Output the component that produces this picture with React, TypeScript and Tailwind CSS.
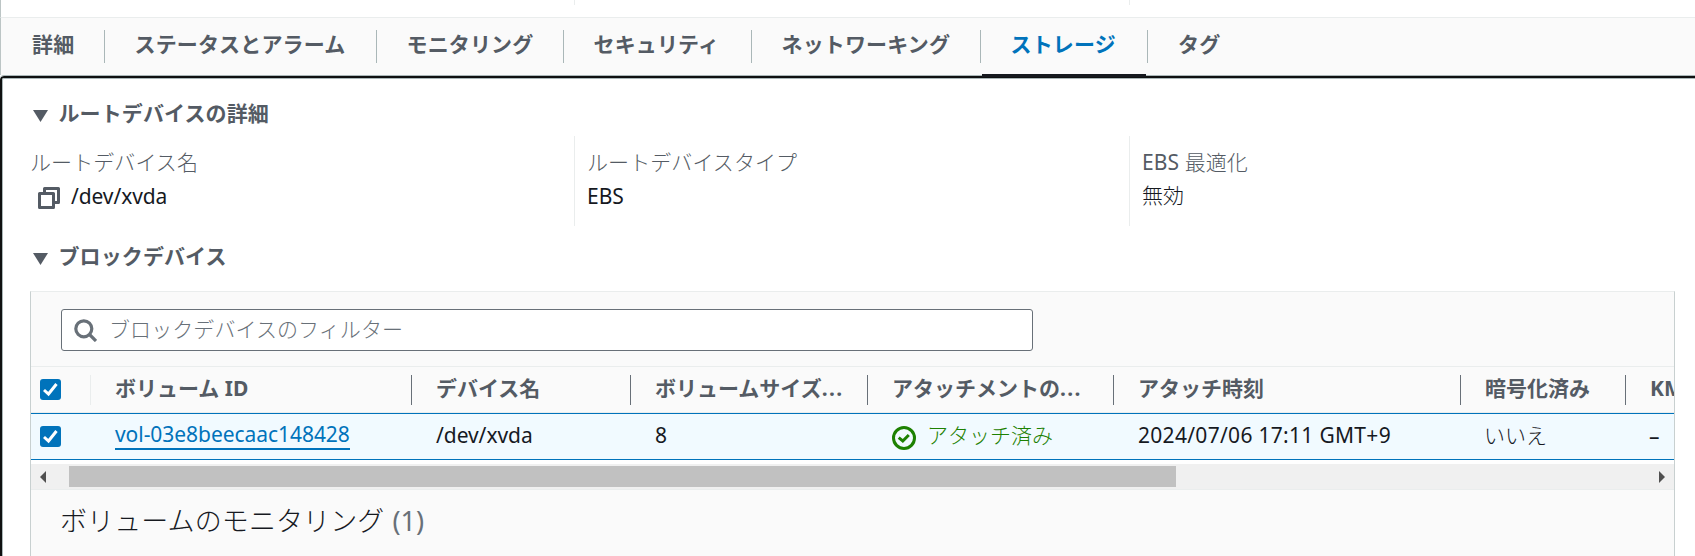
import type { ReactNode } from "react";

type Tab = { label: string; box: string; active?: boolean; last?: boolean };

const tabs: Tab[] = [
  { label: "詳細", box: "w-[104px] pl-[31px]" },
  { label: "ステータスとアラーム", box: "w-[272px] pl-[29.5px]" },
  { label: "モニタリング", box: "w-[187px] pl-[29.5px]" },
  { label: "セキュリティ", box: "w-[188px] pl-[29.5px]" },
  { label: "ネットワーキング", box: "w-[229px] pl-[29.5px]" },
  { label: "ストレージ", box: "w-[167px] pl-[29.5px]", active: true },
  { label: "タグ", box: "w-[120px] pl-[30px]", last: true },
];

function Caret() {
  return (
    <svg className="h-3 w-[15px] shrink-0" viewBox="0 0 15 12">
      <path d="M0 0H15L7.5 12Z" fill="#545b64" />
    </svg>
  );
}

function SectionTitle({ children }: { children: ReactNode }) {
  return (
    <div className="flex h-8 items-center gap-[11px] pl-[29.5px]">
      <span className="pt-1.5">
        <Caret />
      </span>
      <h2 className="text-[21px] leading-8 font-bold tracking-[0.1px] text-[#545b64]">{children}</h2>
    </div>
  );
}

function CopyIcon() {
  return (
    <svg className="h-[22px] w-[22px] shrink-0" viewBox="0 0 22 22" fill="none" stroke="#545b64" strokeWidth="3" strokeLinejoin="round">
      <path d="M1.5 6.5H15.5V20.5H1.5Z" />
      <path d="M6.5 6V1.5H20.5V15.5H16" />
    </svg>
  );
}

function Checkbox() {
  return (
    <span className="flex h-[21px] w-[21px] shrink-0 items-center justify-center rounded-[3px] bg-[#0073bb]">
      <svg className="h-[21px] w-[21px]" viewBox="0 0 21 21" fill="none" stroke="#fff" strokeWidth="3">
        <path d="M4 11L8.5 15L16.5 5" />
      </svg>
    </span>
  );
}

function Field({ label, children, first }: { label: ReactNode; children: ReactNode; first?: boolean }) {
  return (
    <div
      className={
        first
          ? "h-[90px] w-[571px] pt-[10px] pl-[27px]"
          : "h-[90px] w-[555px] border-l border-[#eaeded] pt-[10px] pl-[12px]"
      }
    >
      <div className="h-8 text-[21px] leading-8 font-light tracking-[0.08px] text-[#545b64]">{label}</div>
      <div className="flex h-9 items-center text-[21px] leading-9 text-[#16191f]">{children}</div>
    </div>
  );
}

function Dots() {
  return <span className="tracking-[1.4px]">...</span>;
}

const columns: { title: ReactNode; box: string }[] = [
  { title: "ボリューム ID", box: "w-[321px]" },
  { title: "デバイス名", box: "w-[219px]" },
  { title: <>ボリュームサイズ<Dots /></>, box: "w-[237px]" },
  { title: <>アタッチメントの<Dots /></>, box: "w-[246px]" },
  { title: "アタッチ時刻", box: "w-[347px]" },
  { title: "暗号化済み", box: "w-[165px]" },
  { title: "KMS", box: "w-[200px]" },
];

export default function App() {
  return (
    <div className="flex h-[556px] w-[1695px] flex-col overflow-hidden bg-white font-['Noto_Sans','Noto_Sans_CJK_JP',sans-serif]">
      <div className="flex h-[17px] shrink-0 border-l border-[#bcc5c5]">
        <div className="h-[5px] w-[574px] border-r border-[#eaeded]" />
        <div className="h-[5px] w-[555px] border-r border-[#eaeded]" />
      </div>

      <nav className="flex h-[58px] shrink-0 border-t border-l border-t-[#eaeded] border-l-[#bcc5c5] bg-[#fafafa]">
        {tabs.map((t) => (
          <div key={t.label} className={`relative h-[57px] shrink-0 pt-[10px] ${t.box}`}>
            <div
              className={
                t.active
                  ? "text-[21px] leading-8 font-bold tracking-[0.15px] whitespace-nowrap text-[#0073bb]"
                  : "text-[21px] leading-8 font-bold tracking-[0.15px] whitespace-nowrap text-[#545b64]"
              }
            >
              {t.label}
            </div>
            {!t.last && <span className="absolute top-[12px] right-0 h-[33px] w-px bg-[#aab7b8]" />}
            {t.active && <span className="absolute top-[56px] right-[2px] left-[1px] z-10 h-[3px] bg-[#16191f]" />}
          </div>
        ))}
      </nav>

      <main className="flex h-[481px] shrink-0 flex-col overflow-hidden rounded-tl-[4px] border-t border-[#aab7b8] bg-white">
        <div className="flex h-[500px] shrink-0 flex-col rounded-tl-[4px] border-t-2 border-l-2 border-[#0f1111]">
          <div className="flex grow flex-col rounded-tl-[2px] border-t border-l border-[#aab7b8] pt-[18px]">
            <SectionTitle>ルートデバイスの詳細</SectionTitle>
            <div className="mt-[7px] flex">
              <Field label="ルートデバイス名" first>
                <span className="flex items-center gap-[11px] pl-[8px]">
                  <span className="pt-1">
                    <CopyIcon />
                  </span>
                  <span className="tracking-[-0.1px]">/dev/xvda</span>
                </span>
              </Field>
              <Field label="ルートデバイスタイプ">EBS</Field>
              <Field label={<><span className="font-normal">EBS</span> 最適化</>}>
                <span className="pb-0.5 font-light">無効</span>
              </Field>
            </div>
            <div className="mt-[14px]">
              <SectionTitle>ブロックデバイス</SectionTitle>
            </div>

            <section className="mt-[19px] ml-[27px] flex h-[280px] w-[1645px] flex-col border-x border-t border-x-[#c8d0d0] border-t-[#eaeded] bg-[#fafafa]">
              <div className="h-[74px] shrink-0 pt-[17px] pl-[30px]">
                <div className="flex h-[42px] w-[972px] items-center gap-[12px] rounded-[3px] border border-[#687078] bg-white pl-[12px]">
                  <svg className="h-[23px] w-[23px]" viewBox="0 0 23 23" fill="none" stroke="#687078" strokeWidth="3.2">
                    <circle cx="9.8" cy="9.8" r="8" />
                    <path d="M15.5 15.5L22 22" />
                  </svg>
                  <span className="pb-[3px] text-[21px] leading-8 font-light tracking-[0.08px] text-[#687078]">ブロックデバイスのフィルター</span>
                </div>
              </div>

              <div className="h-[98px] shrink-0 overflow-hidden border-t border-[#eaeded] bg-white">
                <div className="flex h-[46px] w-[1900px] items-center border-b border-[#eaeded] bg-[#fafafa]">
                  <div className="flex w-[59px] pl-[9px]">
                    <Checkbox />
                  </div>
                  {columns.map((c, i) => (
                    <div
                      key={c.box}
                      className={`h-[30px] shrink-0 border-l pl-[24px] text-[21px] leading-[26px] font-bold whitespace-nowrap text-[#545b64] ${i === 0 ? "border-[#eaeded]" : "border-[#687078]"} ${c.box}`}
                    >
                      {c.title}
                    </div>
                  ))}
                </div>
                <div className="flex h-[47px] w-[1900px] items-center border-y border-[#0073bb] bg-[#f1faff] text-[21px] leading-8 text-[#16191f]">
                  <div className="flex w-[59px] pl-[9px]">
                    <Checkbox />
                  </div>
                  <div className="w-[321px] pl-[25px]">
                    <span className="mb-[2px] flex h-[29px] w-fit items-center border-b-2 border-[#0073bb] pb-[1px] tracking-[-0.05px] text-[#0073bb]">vol-03e8beecaac148428</span>
                  </div>
                  <div className="w-[219px] pb-[4px] pl-[25px] tracking-[-0.05px]">/dev/xvda</div>
                  <div className="w-[237px] pb-[4px] pl-[25px]">8</div>
                  <div className="flex w-[246px] items-center gap-[11px] pl-[25px] font-light text-[#1d8102]">
                    <svg className="mt-0.5 h-6 w-6" viewBox="0 0 24 24" fill="none" stroke="#1d8102" strokeWidth="3">
                      <circle cx="12" cy="12" r="10.5" />
                      <path d="M6.7 11.7L10.8 15L16.8 9" />
                    </svg>
                    <span className="pb-1">アタッチ済み</span>
                  </div>
                  <div className="w-[347px] pb-[4px] pl-[25px] tracking-[0.3px]">2024/07/06 17:11 GMT+9</div>
                  <div className="w-[165px] pb-[4px] pl-[24px] font-light">いいえ</div>
                  <div className="w-[200px] pb-[2px] pl-[24px]">–</div>
                </div>
              </div>

              <div className="flex h-[26px] shrink-0 items-center justify-between border-b border-[#eaeded] bg-[#f0f0f0] px-[9px]">
                <svg className="h-3 w-1.5" viewBox="0 0 6 12">
                  <path d="M6 0V12L0 6Z" fill="#505050" />
                </svg>
                <div className="ml-[23px] h-[21px] w-[1107px] bg-[#c1c1c1]" />
                <div className="grow" />
                <svg className="h-3 w-1.5" viewBox="0 0 6 12">
                  <path d="M0 0V12L6 6Z" fill="#505050" />
                </svg>
              </div>

              <h3 className="flex pt-[10px] pl-[29px] text-[27px] leading-[42px] text-[#16191f]">
                <span className="font-light tracking-[0.1px]">ボリュームのモニタリング</span>
                <span className="ml-2 text-[#687078]">(1)</span>
              </h3>
            </section>
          </div>
        </div>
      </main>
    </div>
  );
}
